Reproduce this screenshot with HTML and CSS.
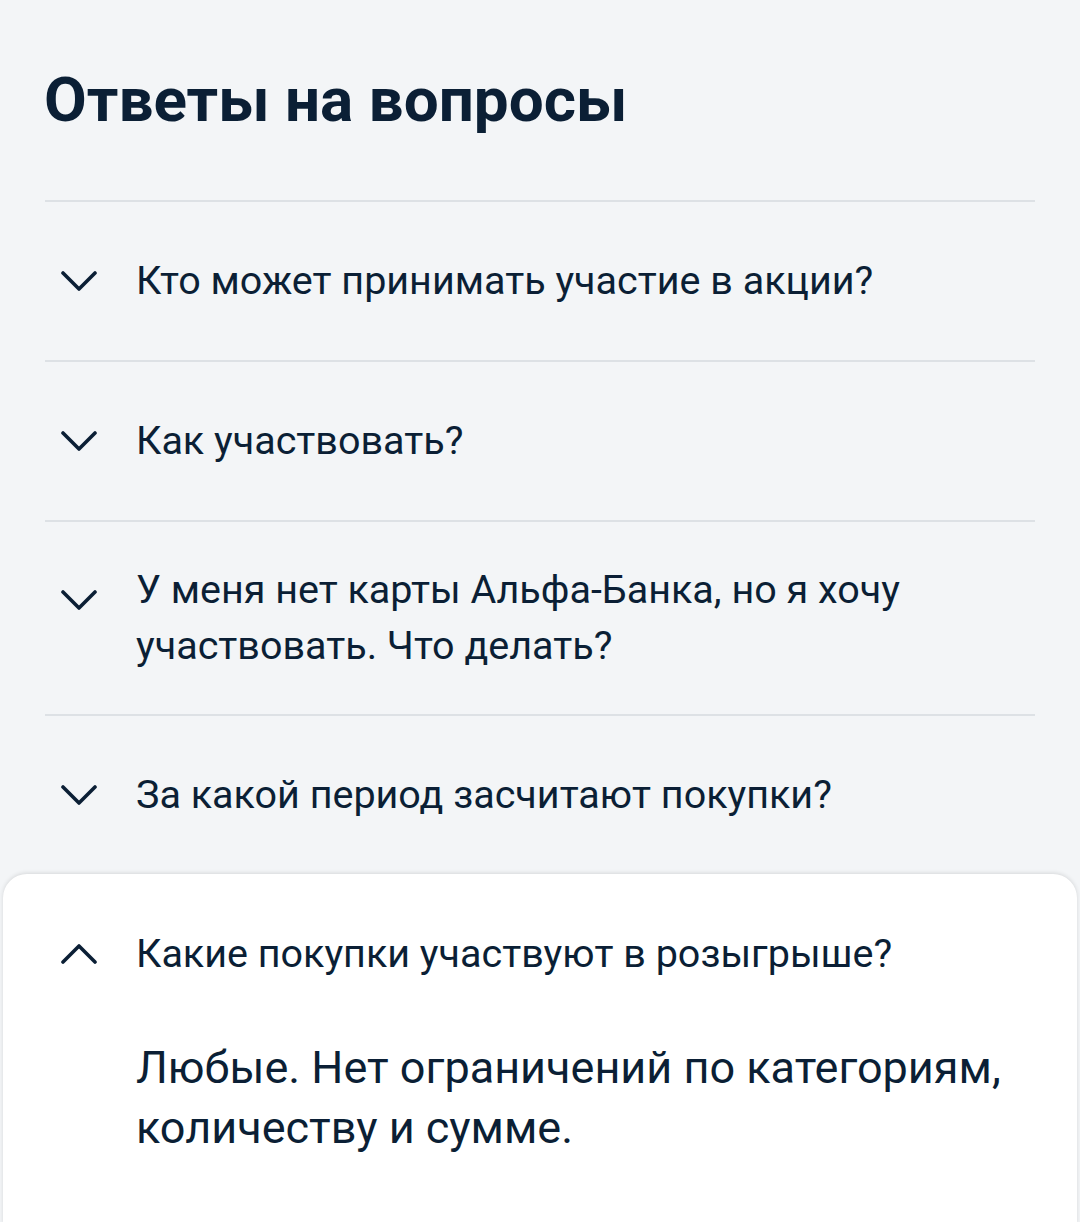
FILE: index.html
```html
<!DOCTYPE html>
<html lang="ru">
<head>
  <meta charset="UTF-8" />
  <meta name="viewport" content="width=device-width, initial-scale=1.0"/>
  <title>Ответы на вопросы</title>
  <link rel="stylesheet" href="styles.css">
</head>
<body>
  <main class="faq">
    <h1 class="faq-title">Ответы на вопросы</h1>

    <ul class="faq-list">
      <li class="faq-item">
        <svg class="chevron" viewBox="0 0 36 20"><polyline points="2,2 18,18 34,2"/></svg>
        <span class="question">Кто может принимать участие в акции?</span>
      </li>
      <li class="faq-item">
        <svg class="chevron" viewBox="0 0 36 20"><polyline points="2,2 18,18 34,2"/></svg>
        <span class="question">Как участвовать?</span>
      </li>
      <li class="faq-item multiline">
        <svg class="chevron" viewBox="0 0 36 20"><polyline points="2,2 18,18 34,2"/></svg>
        <span class="question">У меня нет карты Альфа-Банка, но я хочу участвовать. Что делать?</span>
      </li>
      <li class="faq-item">
        <svg class="chevron" viewBox="0 0 36 20"><polyline points="2,2 18,18 34,2"/></svg>
        <span class="question">За какой период засчитают покупки?</span>
      </li>
    </ul>

    <div class="faq-card">
      <div class="faq-item open">
        <svg class="chevron" viewBox="0 0 36 20"><polyline points="2,18 18,2 34,18"/></svg>
        <span class="question">Какие покупки участвуют в розыгрыше?</span>
      </div>
      <p class="answer">Любые. Нет ограничений по категориям, количеству и сумме.</p>
    </div>
  </main>
</body>
</html>
```

FILE: styles.css
```css
* {
  box-sizing: border-box;
  margin: 0;
  padding: 0;
}

body {
  font-family: Roboto, 'Noto Sans', sans-serif;
  background-color: #f3f5f7;
  color: #0b1f35;
  min-height: 100vh;
}

.faq {
  display: flex;
  flex-direction: column;
}

.faq-title {
  font-size: 62px;
  font-weight: 700;
  line-height: 72px;
  padding: 64px 44px 64px;
  color: #0b1f35;
}

.faq-list {
  list-style: none;
  margin: 0 45px;
}

.faq-item {
  display: flex;
  align-items: center;
  min-height: 160px;
  padding: 40px 0;
  border-top: 2px solid #dde1e5;
}

.faq-item.multiline {
  align-items: flex-start;
}

.faq-item.multiline .chevron {
  margin-top: 28px;
}

.chevron {
  flex: none;
  width: 36px;
  height: 20px;
  margin-left: 16px;
  margin-right: 39px;
  fill: none;
  stroke: #0b1f35;
  stroke-width: 3.6;
  stroke-linecap: round;
  stroke-linejoin: round;
}

.question {
  font-size: 39.5px;
  line-height: 56px;
}

.faq-card {
  margin: 0 3px;
  background-color: #fff;
  border-radius: 24px 24px 0 0;
  box-shadow: 0 -1px 4px rgba(0, 0, 0, 0.12);
  padding: 0 30px 60px 42px;
  min-height: 350px;
}

.faq-item.open {
  border-top: none;
  min-height: 160px;
}

.answer {
  font-size: 45px;
  line-height: 60px;
  padding-top: 4px;
  padding-left: 91px;
}
```
